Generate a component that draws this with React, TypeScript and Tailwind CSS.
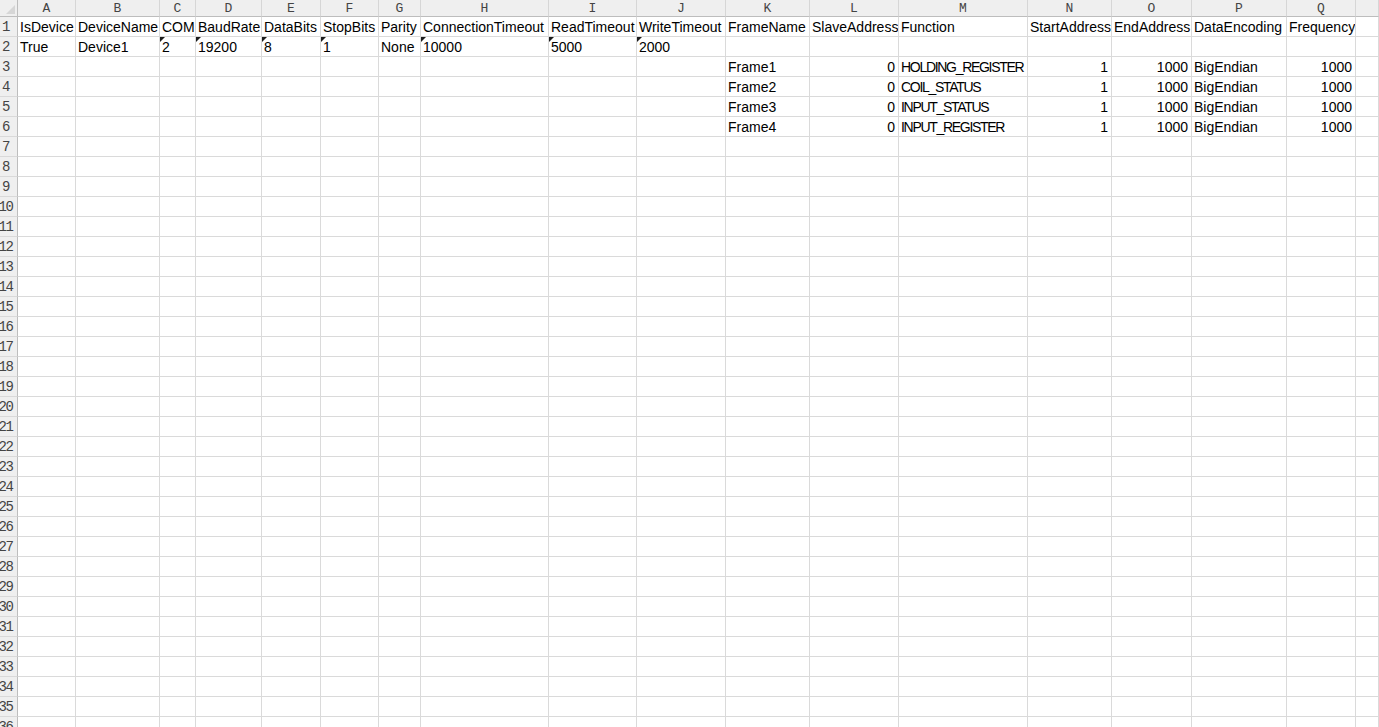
const letters = ["A", "B", "C", "D", "E", "F", "G", "H", "I", "J", "K", "L", "M", "N", "O", "P", "Q", ""];

type Cell = { v: string; right?: boolean; mark?: boolean; caps?: boolean };

const headerRow: Cell[] = [
  "IsDevice", "DeviceName", "COM", "BaudRate", "DataBits", "StopBits", "Parity",
  "ConnectionTimeout", "ReadTimeout", "WriteTimeout", "FrameName", "SlaveAddress",
  "Function", "StartAddress", "EndAddress", "DataEncoding", "Frequency",
].map((v) => ({ v }));

const deviceRow: Cell[] = [
  { v: "True" }, { v: "Device1" }, { v: "2", mark: true }, { v: "19200", mark: true },
  { v: "8", mark: true }, { v: "1", mark: true }, { v: "None" }, { v: "10000", mark: true },
  { v: "5000", mark: true }, { v: "2000", mark: true },
];

const frames = [
  ["Frame1", "HOLDING_REGISTER"],
  ["Frame2", "COIL_STATUS"],
  ["Frame3", "INPUT_STATUS"],
  ["Frame4", "INPUT_REGISTER"],
];

const frameRows: Cell[][] = frames.map(([name, fn]) => [
  ...Array.from({ length: 10 }, () => ({ v: "" })),
  { v: name }, { v: "0", right: true }, { v: fn, caps: true }, { v: "1", right: true },
  { v: "1000", right: true }, { v: "BigEndian" }, { v: "1000", right: true },
]);

const rows: Cell[][] = [headerRow, deviceRow, ...frameRows];
while (rows.length < 36) rows.push([]);

const mono = { fontFamily: '"Liberation Mono", "DejaVu Sans Mono", monospace' };

function App() {
  return (
    <div className="w-[1379px] h-[727px] overflow-hidden bg-white text-black">
      <div
        className="grid grid-cols-[18px_58px_84px_36px_66px_59px_58px_42px_128px_88px_89px_84px_89px_129px_84px_80px_95px_69px_1fr]"
        style={{ fontFamily: '"Liberation Sans", Arial, sans-serif' }}
      >
        {/* select-all corner */}
        <div className="h-[17px] bg-[#efefef] border-r border-b border-[#bdbdbd] flex items-end justify-end p-[2px]">
          <div className="w-0 h-0 border-b-[9px] border-l-[9px] border-b-[#d6d6d6] border-l-transparent" />
        </div>
        {/* column letters */}
        {letters.map((l, i) => (
          <div
            key={i}
            className="h-[17px] bg-[#efefef] border-r border-b border-r-[#d6d6d6] border-b-[#bdbdbd] flex items-center justify-center text-[13px] leading-none text-[#444]"
            style={mono}
          >
            {l}
          </div>
        ))}
        {rows.map((row, r) => (
          <Row key={r} n={r + 1} cells={row} />
        ))}
      </div>
    </div>
  );
}

function Row({ n, cells }: { n: number; cells: Cell[] }) {
  return (
    <>
      <div className="h-[20px] bg-[#efefef] border-r border-b border-r-[#bdbdbd] border-b-[#d9d9d9] overflow-hidden flex justify-center">
        <div
          className="shrink-0 w-[14px] ml-[-6px] pt-[1px] leading-[19px] text-center text-[14px] tracking-[-1.5px] text-[#444]"
          style={mono}
        >
          {n}
        </div>
      </div>
      {letters.map((_, i) => {
        const c = cells[i];
        return (
          <div
            key={i}
            className={
              "relative h-[20px] border-r border-b border-[#dadada] pt-[1px] leading-[19px] text-[14px] whitespace-nowrap overflow-hidden " +
              (c?.right ? "text-right pr-[3px] " : "pl-[2px] ") +
              (c?.caps ? "tracking-[-1.3px]" : "")
            }
          >
            {c?.mark && (
              <div className="absolute left-0 top-0 w-0 h-0 border-t-[5px] border-r-[5px] border-t-[#1b1b1b] border-r-transparent" />
            )}
            {c?.v}
          </div>
        );
      })}
    </>
  );
}

export default App;
